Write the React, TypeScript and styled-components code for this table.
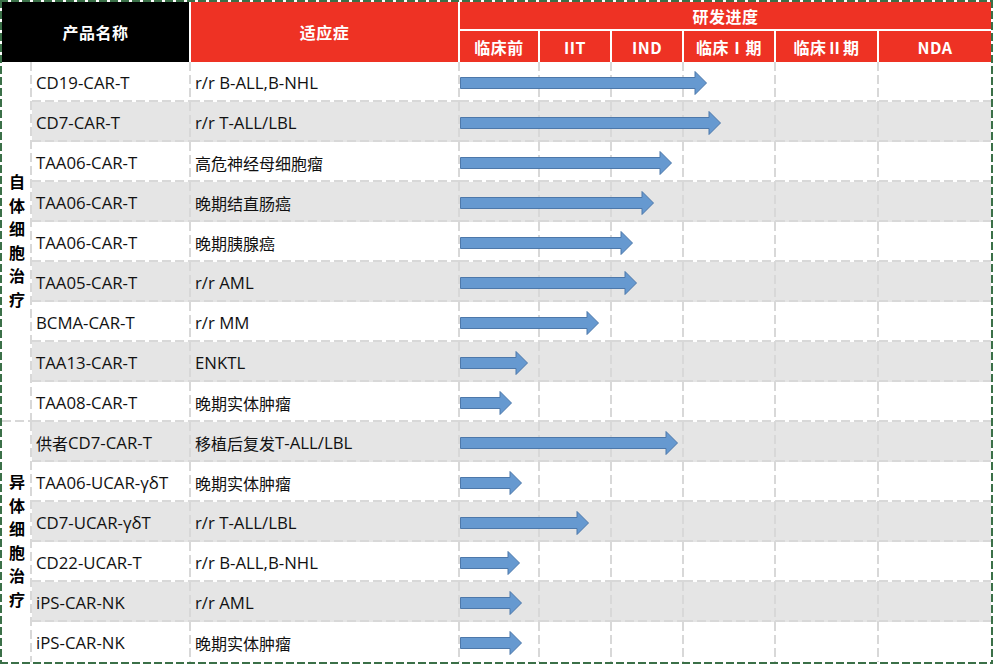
import styled, { createGlobalStyle, css } from "styled-components";

const GlobalStyle = createGlobalStyle`
    html, body {
        margin: 0;
        padding: 0;
        background: #ffffff;
    }
    body {
        font-family: "Open Sans", "Noto Sans CJK SC", sans-serif;
    }
`

const COLS = "159px 269px 80px 72px 72px 92px 103px 112px"
const GRID = "#d8d8d8"
const GREEN = "#3b7048"

// dashed grid lines drawn as repeating gradients: 9px dash, 4px gap
const dashLines = (right: boolean, bottom: boolean) => {
    const imgs: string[] = []
    const sizes: string[] = []
    const pos: string[] = []
    const reps: string[] = []
    if (right) {
        imgs.push(`linear-gradient(to bottom, ${GRID} 9px, transparent 9px)`)
        sizes.push("2px 13px")
        pos.push("right top")
        reps.push("repeat-y")
    }
    if (bottom) {
        imgs.push(`linear-gradient(to right, ${GRID} 9px, transparent 9px)`)
        sizes.push("13px 2px")
        pos.push("left bottom")
        reps.push("repeat-x")
    }
    if (!imgs.length) return css``
    return css`
        background-image: ${imgs.join(", ")};
        background-size: ${sizes.join(", ")};
        background-position: ${pos.join(", ")};
        background-repeat: ${reps.join(", ")};
    `
}

const Frame = styled.div`
    width: 993px;
    height: 664px;
    box-sizing: border-box;
    padding: 2px;
    background-color: #ffffff;
    background-image:
        linear-gradient(to right, ${GREEN} 8px, transparent 8px),
        linear-gradient(to right, ${GREEN} 8px, transparent 8px),
        linear-gradient(to bottom, ${GREEN} 8px, transparent 8px),
        linear-gradient(to bottom, ${GREEN} 8px, transparent 8px);
    background-size: 11px 2px, 11px 2px, 2px 11px, 2px 11px;
    background-position: left top, left bottom, left top, right top;
    background-repeat: repeat-x, repeat-x, repeat-y, repeat-y;
    overflow: hidden;
`

const Header = styled.div`
    display: grid;
    grid-template-columns: 30px ${COLS};
    grid-template-rows: 29px 31px;
    color: #ffffff;
    font-family: "Noto Sans CJK SC", sans-serif;
    font-weight: 700;
    font-size: 16px;
`

const HeadCell = styled.div<{ $dark?: boolean; $col: string; $row: string; $last?: boolean; $under?: boolean }>`
    grid-column: ${p => p.$col};
    grid-row: ${p => p.$row};
    background: ${p => (p.$dark ? "#000000" : "#ee3224")};
    border-right: ${p => (p.$last ? "none" : "2px solid #ffffff")};
    border-bottom: ${p => (p.$under ? "2px solid #ffffff" : "none")};
    display: flex;
    align-items: center;
    justify-content: center;
    letter-spacing: 0.5px;
`

const Body = styled.div`
    display: flex;
`

const GroupColumn = styled.div`
    display: flex;
    flex-direction: column;
    width: 30px;
`

const GroupLabel = styled.div<{ $rows: number; $last?: boolean }>`
    height: ${p => p.$rows * 40}px;
    box-sizing: border-box;
    ${p => dashLines(true, !p.$last)}
    display: flex;
    align-items: center;
    justify-content: center;
    writing-mode: vertical-rl;
    text-orientation: upright;
    font-family: "Noto Sans CJK SC", sans-serif;
    font-weight: 700;
    font-size: 16px;
    letter-spacing: 7.6px;
    color: #000000;
    padding-top: 6px;
`

const Rows = styled.div`
    display: flex;
    flex-direction: column;
    flex: 1;
`

const Row = styled.div<{ $shade: boolean }>`
    position: relative;
    display: grid;
    grid-template-columns: ${COLS};
    height: 40px;
    background-color: ${p => (p.$shade ? "#e5e5e5" : "#ffffff")};
`

const Cell = styled.div<{ $last?: boolean; $bottom?: boolean }>`
    box-sizing: border-box;
    ${p => dashLines(!p.$last, !p.$bottom)}
    display: flex;
    align-items: center;
    padding: 1px 0 0 4px;
    font-family: "Noto Sans CJK SC", sans-serif;
    font-size: 16px;
    color: #111111;
    white-space: nowrap;
`

const Latin = styled.span`
    font-family: "Open Sans", sans-serif;
    font-size: 16.8px;
`

const Arrow = styled.svg`
    position: absolute;
    top: 9px;
    left: 428px;
    height: 24px;
    overflow: visible;
`

const stages = ["临床前", "IIT", "IND", "临床Ⅰ期", "临床Ⅱ期", "NDA"]

const products = [
    { name: "CD19-CAR-T", target: "r/r B-ALL,B-NHL", end: 707 },
    { name: "CD7-CAR-T", target: "r/r T-ALL/LBL", end: 721 },
    { name: "TAA06-CAR-T", target: "高危神经母细胞瘤", end: 672 },
    { name: "TAA06-CAR-T", target: "晚期结直肠癌", end: 654 },
    { name: "TAA06-CAR-T", target: "晚期胰腺癌", end: 633 },
    { name: "TAA05-CAR-T", target: "r/r AML", end: 637 },
    { name: "BCMA-CAR-T", target: "r/r MM", end: 599 },
    { name: "TAA13-CAR-T", target: "ENKTL", end: 528 },
    { name: "TAA08-CAR-T", target: "晚期实体肿瘤", end: 512 },
    { name: "供者CD7-CAR-T", target: "移植后复发T-ALL/LBL", end: 678 },
    { name: "TAA06-UCAR-γδT", target: "晚期实体肿瘤", end: 522 },
    { name: "CD7-UCAR-γδT", target: "r/r T-ALL/LBL", end: 589 },
    { name: "CD22-UCAR-T", target: "r/r B-ALL,B-NHL", end: 520 },
    { name: "iPS-CAR-NK", target: "r/r AML", end: 522 },
    { name: "iPS-CAR-NK", target: "晚期实体肿瘤", end: 522 },
]

// latin runs are set slightly larger than the CJK runs, as in the source sheet
function MixedText({ text }: { text: string }) {
    const parts = text.match(/[\u4e00-\u9fff]+|[^\u4e00-\u9fff]+/g) || []
    return (
        <>
            {parts.map((t, i) =>
                /[\u4e00-\u9fff]/.test(t) ? <span key={i}>{t}</span> : <Latin key={i}>{t}</Latin>
            )}
        </>
    )
}

function ProgressArrow({ width }: { width: number }) {
    const head = 12
    const d = `M0.5 6.5 H${width - head} V0.5 L${width - 0.5} 12 L${width - head} 23.5 V17.5 H0.5 Z`
    return (
        <Arrow width={width} viewBox={`0 0 ${width} 24`} style={{ width }}>
            <path d={d} fill="#6699d0" stroke="#4d78aa" strokeWidth="1" />
        </Arrow>
    )
}

function App() {
    return (
        <>
            <GlobalStyle />
            <Frame>
                <Header>
                    <HeadCell $dark $col="1 / 3" $row="1 / 3">产品名称</HeadCell>
                    <HeadCell $col="3" $row="1 / 3">适应症</HeadCell>
                    <HeadCell $col="4 / 10" $row="1" $last $under>研发进度</HeadCell>
                    {stages.map((s, i) => (
                        <HeadCell key={s} $col={`${i + 4}`} $row="2" $last={i === stages.length - 1}>
                            {s}
                        </HeadCell>
                    ))}
                </Header>
                <Body>
                    <GroupColumn>
                        <GroupLabel $rows={9}>自体细胞治疗</GroupLabel>
                        <GroupLabel $rows={6} $last>异体细胞治疗</GroupLabel>
                    </GroupColumn>
                    <Rows>
                        {products.map((p, i) => {
                            const last = i === products.length - 1
                            return (
                                <Row key={i} $shade={i % 2 === 1}>
                                    <Cell $bottom={last}><MixedText text={p.name} /></Cell>
                                    <Cell $bottom={last}><MixedText text={p.target} /></Cell>
                                    {stages.map((s, j) => (
                                        <Cell key={s} $bottom={last} $last={j === stages.length - 1} />
                                    ))}
                                    <ProgressArrow width={p.end - 460} />
                                </Row>
                            )
                        })}
                    </Rows>
                </Body>
            </Frame>
        </>
    )
}

export default App;
